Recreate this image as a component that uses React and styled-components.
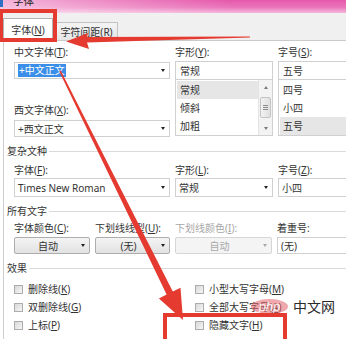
import React from 'react';
import styled, { createGlobalStyle } from 'styled-components';

const GlobalStyle = createGlobalStyle`
  body {
    margin: 0;
    background: #fff;
    overflow: hidden;
  }
`;

const FONT = `"Noto Sans", "Noto Sans CJK SC", sans-serif`;
const RED = '#e53a30';

function App() {
  return (
    <>
      <GlobalStyle />
      <Frame>
        <Dialog>
          <TitleBar>
            <AppIcon />
            <TitleText>字体</TitleText>
          </TitleBar>

          <TabStrip>
            <Tab $active>字体(<Key>N</Key>)</Tab>
            <Tab>字符间距(<Key>R</Key>)</Tab>
          </TabStrip>

          <Panel>
            <FieldGrid $cols="156px 98px 1fr">
              <Column>
                <Label>中文字体(<Key>T</Key>):</Label>
                <Combo $mt={4}>
                  <Selected>+中文正文</Selected>
                  <Arrow />
                </Combo>
                <Label $mt={25}>西文字体(<Key>X</Key>):</Label>
                <Combo $mt={4}>
                  +西文正文
                  <Arrow />
                </Combo>
              </Column>
              <Column>
                <Label>字形(<Key>Y</Key>):</Label>
                <TextBox>常规</TextBox>
                <ListBox>
                  <Items>
                    <ListItem $selected>常规</ListItem>
                    <ListItem>倾斜</ListItem>
                    <ListItem>加粗</ListItem>
                  </Items>
                  <ScrollBar>
                    <ScrollBtn><ScrollArrow $up /></ScrollBtn>
                    <Thumb><Grip /></Thumb>
                    <ScrollBtn $push><ScrollArrow /></ScrollBtn>
                  </ScrollBar>
                </ListBox>
              </Column>
              <Column>
                <Label>字号(<Key>S</Key>):</Label>
                <TextBox>五号</TextBox>
                <ListBox>
                  <Items>
                    <ListItem>四号</ListItem>
                    <ListItem>小四</ListItem>
                    <ListItem $selected>五号</ListItem>
                  </Items>
                </ListBox>
              </Column>
            </FieldGrid>

            <SectionHead $mt={8}>复杂文种</SectionHead>
            <FieldGrid $cols="156px 98px 1fr" $mt={7}>
              <Column>
                <Label>字体(<Key>F</Key>):</Label>
                <Combo $mt={2} $h={19}>
                  Times New Roman
                  <Arrow />
                </Combo>
              </Column>
              <Column>
                <Label>字形(<Key>L</Key>):</Label>
                <Combo $mt={2} $h={19}>
                  常规
                  <Arrow />
                </Combo>
              </Column>
              <Column>
                <Label>字号(<Key>Z</Key>):</Label>
                <Combo $mt={2} $h={19}>小四</Combo>
              </Column>
            </FieldGrid>

            <SectionHead $mt={8}>所有文字</SectionHead>
            <FieldGrid $cols="76px 75px 97px 1fr" $mt={5}>
              <Column>
                <Label>字体颜色(<Key>C</Key>):</Label>
                <DropButton>
                  <BtnText>自动</BtnText>
                  <Arrow />
                </DropButton>
              </Column>
              <Column>
                <Label>下划线线型(<Key>U</Key>):</Label>
                <DropButton>
                  <BtnText>(无)</BtnText>
                  <Arrow />
                </DropButton>
              </Column>
              <Column>
                <Label $disabled>下划线颜色(<Key>I</Key>):</Label>
                <DropButton $disabled>
                  <BtnText>自动</BtnText>
                  <Arrow $disabled />
                </DropButton>
              </Column>
              <Column>
                <Label>着重号:</Label>
                <Combo $mt={3}>(无)</Combo>
              </Column>
            </FieldGrid>

            <SectionHead $mt={8}>效果</SectionHead>
            <Effects>
              <CheckRow><CheckBox /><span>删除线(<Key>K</Key>)</span></CheckRow>
              <CheckRow><CheckBox /><span>双删除线(<Key>G</Key>)</span></CheckRow>
              <CheckRow><CheckBox /><span>上标(<Key>P</Key>)</span></CheckRow>
              <CheckRow><CheckBox /><span>小型大写字母(<Key>M</Key>)</span></CheckRow>
              <CheckRow><CheckBox /><span>全部大写字母(<Key>A</Key>)</span></CheckRow>
              <CheckRow><CheckBox /><span>隐藏文字(<Key>H</Key>)</span></CheckRow>
            </Effects>
          </Panel>
        </Dialog>

        <Watermark>
          <PhpBadge>php</PhpBadge>
          <WatermarkText>中文网</WatermarkText>
        </Watermark>

        {/* 红色标注：框和箭头 */}
        <Marks width="346" height="339" viewBox="0 0 346 339">
          <rect x="1" y="11" width="54" height="29" fill="none" stroke={RED} strokeWidth="4" />
          <rect x="165" y="315" width="120" height="40" fill="none" stroke={RED} strokeWidth="4" />
          <polygon
            fill={RED}
            points="66,41.5 88,33 87,37 250,36.5 250,37.4 87,42.5 89,49"
          />
          <polygon
            fill={RED}
            points="60.7,70.6 172.8,291.5 180.5,287.8 183,320 158.9,298.4 166.6,294.6 59.3,71.4"
          />
        </Marks>
      </Frame>
    </>
  );
}

const Frame = styled.div`
  position: relative;
  width: 346px;
  height: 339px;
  overflow: hidden;
  background: #fff;
  font-family: ${FONT};
  font-size: 10px;
  color: #333;
`;

const Dialog = styled.div`
  width: 420px;
`;

const TitleBar = styled.div`
  height: 13px;
  display: flex;
  align-items: flex-start;
  overflow: hidden;
  background:
    linear-gradient(90deg, rgba(255, 255, 255, 0.55), rgba(255, 255, 255, 0) 55%),
    linear-gradient(180deg, #e558ab 0%, #ea74ba 55%, #f5b8dc 100%);
`;

const AppIcon = styled.div`
  width: 3px;
  height: 7px;
  flex-shrink: 0;
  background: #2f6fc6;
`;

const TitleText = styled.div`
  margin-left: 10px;
  margin-top: -5px;
  font-size: 10.5px;
  line-height: 12px;
  color: #222;
`;

const TabStrip = styled.div`
  height: 27px;
  display: flex;
  align-items: flex-end;
  gap: 2px;
  padding-left: 3px;
  background: #f0f0f0;
  border-bottom: 1px solid #cacaca;
`;

const Tab = styled.div`
  box-sizing: border-box;
  display: flex;
  align-items: center;
  justify-content: center;
  width: ${({ $active }) => ($active ? '50px' : '63px')};
  height: ${({ $active }) => ($active ? '23px' : '18px')};
  margin-bottom: ${({ $active }) => ($active ? '-1px' : '0')};
  border: 1px solid ${({ $active }) => ($active ? '#b4b4b4' : '#c2c2c2')};
  border-bottom: none;
  background: ${({ $active }) =>
    $active ? '#fff' : 'linear-gradient(180deg, #f4f4f4, #e6e6e6)'};
  white-space: nowrap;
  line-height: 12px;
`;

const Key = styled.span`
  text-decoration: underline;
`;

const Panel = styled.div`
  margin-left: 3px;
  padding: 5px 0 20px 3px;
  border-left: 1px solid #cdcdcd;
  background: #fff;
`;

const FieldGrid = styled.div`
  display: grid;
  grid-template-columns: ${({ $cols }) => $cols};
  column-gap: 5px;
  padding-left: 7px;
  margin-top: ${({ $mt }) => $mt || 0}px;
`;

const Column = styled.div`
  display: flex;
  flex-direction: column;
  min-width: 0;
`;

const Label = styled.div`
  height: 12px;
  line-height: 12px;
  white-space: nowrap;
  margin-top: ${({ $mt }) => $mt || 0}px;
  color: ${({ $disabled }) => ($disabled ? '#a6a6a6' : '#333')};
`;

const Combo = styled.div`
  box-sizing: border-box;
  display: flex;
  align-items: center;
  height: ${({ $h }) => $h || 17}px;
  margin-top: ${({ $mt }) => $mt || 0}px;
  padding-left: 3px;
  border: 1px solid #d0d0d0;
  background: #fff;
  white-space: nowrap;
  line-height: 12px;
`;

const Selected = styled.span`
  padding: 0 1px;
  line-height: 13px;
  background: #3a8ee8;
  color: #fff;
`;

const Arrow = styled.span`
  margin-left: auto;
  margin-right: 4px;
  width: 0;
  height: 0;
  border-left: 2.5px solid transparent;
  border-right: 2.5px solid transparent;
  border-top: 3px solid ${({ $disabled }) => ($disabled ? '#a8a8a8' : '#222')};
  flex-shrink: 0;
`;

const TextBox = styled.div`
  box-sizing: border-box;
  display: flex;
  align-items: center;
  height: 19px;
  margin-top: 3px;
  padding-left: 4px;
  border: 1px solid #d0d0d0;
  background: #fff;
  line-height: 12px;
`;

const ListBox = styled.div`
  box-sizing: border-box;
  display: flex;
  height: 56px;
  padding: 1px 0 0 1px;
  border: 1px solid #d0d0d0;
  border-top: none;
  background: #fff;
`;

const Items = styled.div`
  flex: 1;
  display: flex;
  flex-direction: column;
`;

const ListItem = styled.div`
  height: 18px;
  line-height: 18px;
  padding-left: 3px;
  background: ${({ $selected }) => ($selected ? '#e6e6e6' : 'transparent')};
`;

const ScrollBar = styled.div`
  width: 13px;
  margin-top: -1px;
  display: flex;
  flex-direction: column;
  align-items: center;
  background: #f3f3f3;
  border-left: 1px solid #e4e4e4;
`;

const ScrollBtn = styled.div`
  height: 14px;
  width: 100%;
  display: flex;
  align-items: center;
  justify-content: center;
  margin-top: ${({ $push }) => ($push ? 'auto' : '0')};
`;

const ScrollArrow = styled.span`
  width: 0;
  height: 0;
  border-left: 2.5px solid transparent;
  border-right: 2.5px solid transparent;
  ${({ $up }) =>
    $up ? 'border-bottom: 3px solid #7a7a7a;' : 'border-top: 3px solid #7a7a7a;'}
`;

const Thumb = styled.div`
  box-sizing: border-box;
  width: 11px;
  height: 21px;
  margin-top: 3px;
  display: flex;
  align-items: center;
  justify-content: center;
  border: 1px solid #c4c4c4;
  border-radius: 2px;
  background: linear-gradient(90deg, #f2f2f2, #e0e0e0);
`;

const Grip = styled.div`
  width: 5px;
  height: 5px;
  background: repeating-linear-gradient(180deg, #8c8c8c 0 1px, transparent 1px 2px);
`;

const SectionHead = styled.div`
  display: flex;
  align-items: center;
  gap: 2px;
  height: 12px;
  line-height: 12px;
  margin-top: ${({ $mt }) => $mt || 0}px;
  white-space: nowrap;

  &::after {
    content: '';
    flex: 1;
    height: 1px;
    background: #dadada;
  }
`;

const DropButton = styled.div`
  box-sizing: border-box;
  display: flex;
  align-items: center;
  height: 17px;
  margin-top: 3px;
  border: 1px solid ${({ $disabled }) => ($disabled ? '#d6d6d6' : '#adadad')};
  border-radius: 2px;
  background: ${({ $disabled }) =>
    $disabled ? '#f4f4f4' : 'linear-gradient(180deg, #f4f4f4, #e2e2e2)'};
  color: ${({ $disabled }) => ($disabled ? '#a8a8a8' : '#333')};
  line-height: 12px;
`;

const BtnText = styled.span`
  flex: 1;
  text-align: center;
  white-space: nowrap;
`;

const Effects = styled.div`
  display: grid;
  grid-template-columns: 181px 1fr;
  grid-template-rows: repeat(3, 18px);
  grid-auto-flow: column;
  padding-left: 7px;
  margin-top: 6px;
`;

const CheckRow = styled.div`
  display: flex;
  align-items: center;
  gap: 5px;
  white-space: nowrap;
  line-height: 12px;
`;

const CheckBox = styled.span`
  box-sizing: border-box;
  width: 9px;
  height: 9px;
  flex-shrink: 0;
  border: 1px solid #acacac;
  background: linear-gradient(135deg, #d8d8d8, #f6f6f6);
`;

const Watermark = styled.div`
  position: absolute;
  left: 251px;
  top: 299px;
  display: flex;
  align-items: center;
  gap: 5px;
`;

const PhpBadge = styled.div`
  width: 37px;
  height: 15px;
  border-radius: 50%;
  background: rgba(226, 96, 104, 0.55);
  color: rgba(255, 255, 255, 0.9);
  font-family: "Liberation Sans", sans-serif;
  font-style: italic;
  font-size: 13px;
  line-height: 15px;
  text-align: center;
`;

const WatermarkText = styled.div`
  font-family: "Noto Sans CJK SC", sans-serif;
  font-size: 14px;
  line-height: 15px;
  color: #2a2a2a;
`;

const Marks = styled.svg`
  position: absolute;
  left: 0;
  top: 0;
  pointer-events: none;
`;

export default App;
